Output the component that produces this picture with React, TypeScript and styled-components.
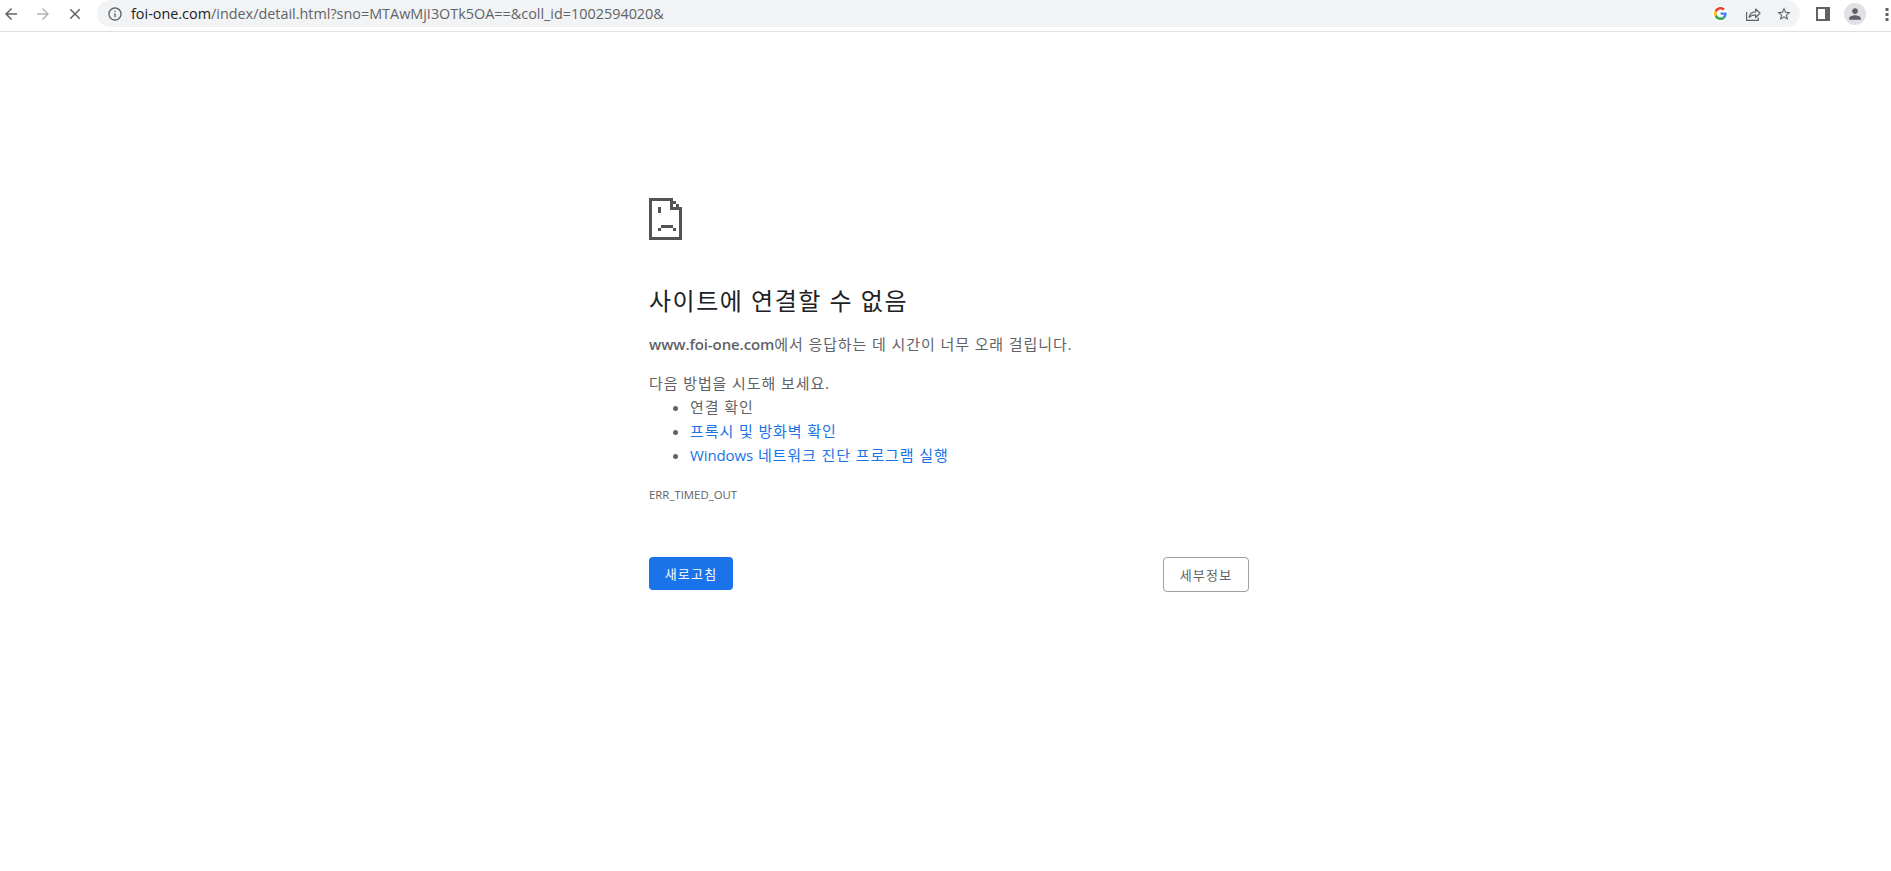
import styled, { createGlobalStyle } from "styled-components"

const GlobalStyle = createGlobalStyle`
  html, body {
    margin: 0;
    padding: 0;
    background: #ffffff;
  }
  body {
    font-family: "Open Sans", "Noto Sans CJK KR", sans-serif;
  }
`

const Toolbar = styled.header`
  display: flex;
  align-items: flex-start;
  height: 31px;
  border-bottom: 1px solid #dfe0e2;
  background: #ffffff;
`

const NavButton = styled.span<{ $dim?: boolean }>`
  display: flex;
  align-items: center;
  justify-content: center;
  width: 22px;
  height: 27px;
  color: ${(p) => (p.$dim ? "#b3b5b8" : "#5f6368")};
`

const NavGroup = styled.nav`
  display: flex;
  gap: 10px;
  width: 97px;
`

const Omnibox = styled.div`
  display: flex;
  align-items: center;
  width: 1703px;
  height: 27px;
  border-radius: 14px;
  background: #f1f3f4;
  padding: 0 8px 0 10px;
  box-sizing: border-box;
  color: #5f6368;
`

const UrlText = styled.span`
  margin-left: 8px;
  flex: 1;
  font-size: 14.4px;
  color: #5f6368;
  white-space: nowrap;
`

const UrlHost = styled.span`
  color: #202124;
`

const OmniActions = styled.div`
  display: flex;
  align-items: center;
  gap: 15px;
`

const GoogleBadge = styled.span`
  display: flex;
  align-items: center;
  justify-content: center;
  width: 16px;
  height: 16px;
  margin-right: 2px;
  border-radius: 50%;
  background: #ffffff;
`

const ChromeArea = styled.div`
  display: flex;
  align-items: center;
  height: 27px;
  margin-left: 16px;
  gap: 14px;
  color: #5f6368;
`

const Avatar = styled.span`
  display: flex;
  align-items: center;
  justify-content: center;
  width: 22px;
  height: 22px;
  margin-right: 5px;
  border-radius: 50%;
  background: #dfe1e5;
  color: #5f6368;
`

const Main = styled.main`
  padding: 166px 0 0 649px;
  height: 839px;
  box-sizing: border-box;
  overflow: hidden;
`

const Wrapper = styled.div`
  width: 600px;
  color: #5f6368;
  font-size: 15px;
  line-height: 24px;
  letter-spacing: 0.9px;
`

const SadIcon = styled.svg`
  display: block;
  width: 33px;
  height: 42px;
  shape-rendering: crispEdges;
`

const Heading = styled.h1`
  margin: 46px 0 16px;
  font-size: 24px;
  line-height: 30px;
  font-weight: 400;
  letter-spacing: 1.5px;
  color: #202124;
`

const Paragraph = styled.p`
  margin: 0 0 15px;
`

const Host = styled.strong`
  font-weight: 600;
  letter-spacing: -0.1px;
`

const Latin = styled.span`
  letter-spacing: -0.1px;
`

const Suggestions = styled.ul`
  margin: 0;
  padding-left: 41px;
`

const Link = styled.a`
  color: #1a73e8;
  text-decoration: none;
`

const ErrorCode = styled.div`
  margin-top: 19px;
  font-size: 11.4px;
  line-height: 18px;
  letter-spacing: 0;
`

const ButtonRow = styled.div`
  display: flex;
  justify-content: space-between;
  align-items: flex-start;
  margin-top: 53px;
`

const Reload = styled.button`
  width: 84px;
  height: 33px;
  padding: 0;
  border: none;
  border-radius: 4px;
  background: #1a73e8;
  color: #ffffff;
  font: 13px "Open Sans", "Noto Sans CJK KR", sans-serif;
  letter-spacing: 1.2px;
`

const Details = styled.button`
  width: 86px;
  height: 35px;
  padding: 0;
  border: 1px solid #9aa0a6;
  border-radius: 4px;
  background: #ffffff;
  color: #5f6368;
  font: 13px "Open Sans", "Noto Sans CJK KR", sans-serif;
  letter-spacing: 1.2px;
`

const Back = () => (
  <svg width="18" height="18" viewBox="0 0 24 24" fill="currentColor">
    <path d="M20 11H7.83l5.59-5.59L12 4l-8 8 8 8 1.41-1.41L7.83 13H20v-2z" />
  </svg>
)

const Forward = () => (
  <svg width="18" height="18" viewBox="0 0 24 24" fill="currentColor">
    <path d="M4 11h12.17l-5.59-5.59L12 4l8 8-8 8-1.41-1.41L16.17 13H4v-2z" />
  </svg>
)

const Stop = () => (
  <svg width="18" height="18" viewBox="0 0 24 24" fill="currentColor">
    <path d="M19 6.41L17.59 5 12 10.59 6.41 5 5 6.41 10.59 12 5 17.59 6.41 19 12 13.41 17.59 19 19 17.59 13.41 12z" />
  </svg>
)

const Info = () => (
  <svg width="16" height="16" viewBox="0 0 24 24" fill="currentColor">
    <path d="M11 7h2v2h-2zm0 4h2v6h-2zm1-9C6.48 2 2 6.48 2 12s4.48 10 10 10 10-4.48 10-10S17.52 2 12 2zm0 18c-4.41 0-8-3.59-8-8s3.59-8 8-8 8 3.59 8 8-3.59 8-8 8z" />
  </svg>
)

const GoogleG = () => (
  <svg width="13" height="13" viewBox="0 0 48 48">
    <path fill="#EA4335" d="M24 9.5c3.54 0 6.71 1.22 9.21 3.6l6.85-6.85C35.9 2.38 30.47 0 24 0 14.62 0 6.51 5.38 2.56 13.22l7.98 6.19C12.43 13.72 17.74 9.5 24 9.5z" />
    <path fill="#4285F4" d="M46.98 24.55c0-1.57-.15-3.09-.38-4.55H24v9.02h12.94c-.58 2.96-2.26 5.48-4.78 7.18l7.73 6c4.51-4.18 7.09-10.36 7.09-17.65z" />
    <path fill="#FBBC05" d="M10.53 28.59c-.48-1.45-.76-2.99-.76-4.59s.27-3.14.76-4.59l-7.98-6.19C.92 16.46 0 20.12 0 24c0 3.88.92 7.54 2.56 10.78l7.97-6.19z" />
    <path fill="#34A853" d="M24 48c6.48 0 11.93-2.13 15.89-5.81l-7.73-6c-2.15 1.45-4.92 2.3-8.16 2.3-6.26 0-11.57-4.22-13.47-9.91l-7.98 6.19C6.51 42.62 14.62 48 24 48z" />
  </svg>
)

const Share = () => (
  <svg width="16" height="16" viewBox="0 0 16 16" fill="none" stroke="currentColor" strokeWidth="1.2">
    <path d="M1.6 6v8.4h11.6v-3" />
    <path d="M4.2 11.4c.5-3.6 3-5.6 6.4-5.6V3l4.4 4.3-4.4 4.2V8.8c-2.6 0-4.8.8-6.4 2.6z" strokeLinejoin="round" />
  </svg>
)

const Star = () => (
  <svg width="16" height="16" viewBox="0 0 24 24" fill="currentColor">
    <path d="M22 9.24l-7.19-.62L12 2 9.19 8.63 2 9.24l5.46 4.73L5.82 21 12 17.27 18.18 21l-1.63-7.03L22 9.24zM12 15.4l-3.76 2.27 1-4.28-3.32-2.88 4.38-.38L12 6.1l1.71 4.04 4.38.38-3.32 2.88 1 4.28L12 15.4z" />
  </svg>
)

const SidePanel = () => (
  <svg width="14" height="14" viewBox="0 0 14 14">
    <path fill="currentColor" fillRule="evenodd" d="M0 0h14v14H0zM2 2v10h7V2z" />
  </svg>
)

const Person = () => (
  <svg width="14" height="14" viewBox="0 0 24 24" fill="currentColor">
    <path d="M12 12c2.76 0 5-2.24 5-5s-2.24-5-5-5-5 2.24-5 5 2.24 5 5 5zm0 2c-3.34 0-10 1.67-10 5v3h20v-3c0-3.33-6.66-5-10-5z" />
  </svg>
)

const Dots = () => (
  <svg width="4" height="14" viewBox="0 0 4 14" fill="currentColor">
    <rect x="0.5" y="1" width="3" height="3" />
    <rect x="0.5" y="6" width="3" height="3" />
    <rect x="0.5" y="11" width="3" height="3" />
  </svg>
)

// 11 x 14 cell pixel art, each cell is 3px
const SadPage = () => (
  <SadIcon viewBox="0 0 11 14" fill="#535353">
    <path d="M0 0h8v1h1v1h1v1h1v11H0zM1 1v12h9V4H7V1z" fillRule="evenodd" />
    <path d="M8 2h1v1H8z" fill="#ffffff" />
    <path d="M3 3h1v2H3zM4 9h4v1H4zM3 10h1v1H3zM8 10h1v1H8z" />
  </SadIcon>
)

export default function App() {
  return (
    <>
      <GlobalStyle />
      <Toolbar>
        <NavGroup>
          <NavButton><Back /></NavButton>
          <NavButton $dim><Forward /></NavButton>
          <NavButton><Stop /></NavButton>
        </NavGroup>
        <Omnibox>
          <Info />
          <UrlText>
            <UrlHost>foi-one.com</UrlHost>/index/detail.html?sno=MTAwMjI3OTk5OA==&amp;coll_id=1002594020&amp;
          </UrlText>
          <OmniActions>
            <GoogleBadge><GoogleG /></GoogleBadge>
            <Share />
            <Star />
          </OmniActions>
        </Omnibox>
        <ChromeArea>
          <SidePanel />
          <Avatar><Person /></Avatar>
          <Dots />
        </ChromeArea>
      </Toolbar>
      <Main>
        <Wrapper>
          <SadPage />
          <Heading>사이트에 연결할 수 없음</Heading>
          <Paragraph><Host>www.foi-one.com</Host>에서 응답하는 데 시간이 너무 오래 걸립니다.</Paragraph>
          <div>다음 방법을 시도해 보세요.</div>
          <Suggestions>
            <li>연결 확인</li>
            <li><Link href="#">프록시 및 방화벽 확인</Link></li>
            <li><Link href="#"><Latin>Windows</Latin> 네트워크 진단 프로그램 실행</Link></li>
          </Suggestions>
          <ErrorCode>ERR_TIMED_OUT</ErrorCode>
          <ButtonRow>
            <Reload>새로고침</Reload>
            <Details>세부정보</Details>
          </ButtonRow>
        </Wrapper>
      </Main>
    </>
  )
}
